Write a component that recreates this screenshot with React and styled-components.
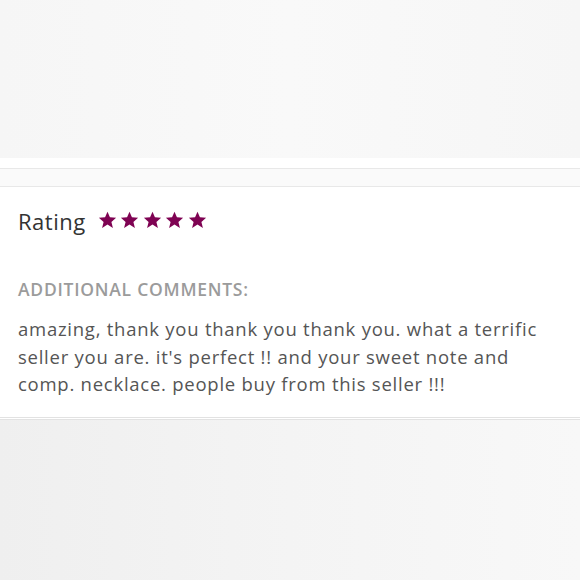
import React from 'react'
import styled, { createGlobalStyle } from 'styled-components'

const GlobalStyle = createGlobalStyle`
  html, body {
    margin: 0;
    padding: 0;
    background: #f4f4f4;
  }
`

const Star = () => (
  <svg width='19' height='18' viewBox='0 0 24 23'>
    <path
      d='M12 0.8l3.1 7.3 7.9 0.6-6 5.2 1.9 7.7L12 17.4l-6.9 4.2 1.9-7.7-6-5.2 7.9-0.6z'
      fill='#7f0353'
    />
  </svg>
)

const App = () => {
  return (
    <Page>
      <GlobalStyle />
      <TopShade />
      <Spacer />
      <Band />
      <Card>
        <RatingRow>
          <RatingLabel>Rating</RatingLabel>
          <Stars>
            {[0, 1, 2, 3, 4].map((i) => (
              <Star key={i} />
            ))}
          </Stars>
        </RatingRow>
        <CommentLabel>Additional Comments:</CommentLabel>
        <CommentText>
          amazing, thank you thank you thank you. what a terrific seller you are. it's perfect !! and your sweet
          note and comp. necklace. people buy from this seller !!!
        </CommentText>
      </Card>
      <BottomShade />
    </Page>
  )
}

const Page = styled.div`
  width: 580px;
  height: 580px;
  display: flex;
  flex-direction: column;
  overflow: hidden;
  font-family: 'Open Sans', Lato, sans-serif;
`

const TopShade = styled.div`
  height: 158px;
  background: linear-gradient(90deg, #f6f6f6, #f9f9f9 50%, #f6f6f6);
`

const Spacer = styled.div`
  height: 10px;
  background: #ffffff;
`

const Band = styled.div`
  height: 17px;
  background: #fafafa;
  border-top: 1px solid #e8e8e8;
  border-bottom: 1px solid #e8e8e8;
`

const Card = styled.div`
  background: #ffffff;
  padding: 20px 18px 19px;
  border-bottom: 3px double #e2e2e2;
`

const RatingRow = styled.div`
  display: flex;
  align-items: center;
  gap: 12px;
  height: 27px;
`

const RatingLabel = styled.span`
  font-size: 22px;
  font-weight: 500;
  letter-spacing: 0.5px;
  color: #333333;
`

const Stars = styled.div`
  display: flex;
  gap: 3.5px;
  margin-top: -2px;
`

const CommentLabel = styled.div`
  margin-top: 43px;
  font-size: 17.5px;
  font-weight: 600;
  text-transform: uppercase;
  letter-spacing: 0.75px;
  color: #9b9b9b;
`

const CommentText = styled.p`
  margin: 14px 0 0;
  font-size: 18.5px;
  letter-spacing: 0.75px;
  line-height: 27.5px;
  color: #555555;
  max-width: 540px;
`

const BottomShade = styled.div`
  flex: 1;
  background: linear-gradient(90deg, #efefef, #f4f4f4 50%, #f8f8f8);
`

export default App
